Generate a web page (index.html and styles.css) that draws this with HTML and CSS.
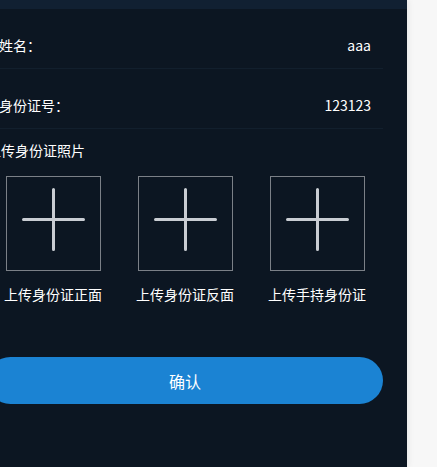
FILE: index.html
```html
<!DOCTYPE html>
<html lang="zh-CN">
<head>
<meta charset="utf-8">
<title>实名认证</title>
<link rel="stylesheet" href="styles.css">
</head>
<body>
<div class="page">
  <div class="panel">
    <div class="topbar"></div>
    <div class="content">
      <div class="row">
        <span class="label">姓名：</span>
        <span class="value">aaa</span>
      </div>
      <div class="row">
        <span class="label">身份证号：</span>
        <span class="value">123123</span>
      </div>
      <div class="section-title">上传身份证照片</div>
      <div class="uploads">
        <div class="upload">
          <div class="box">
            <svg class="plus" width="95" height="95" viewBox="0 0 95 95"><path d="M47.5 13.5V73.5M17.5 43.5H77.5" stroke="#c9cdd3" stroke-width="3" stroke-linecap="round" fill="none"/></svg>
          </div>
          <div class="upload-label">上传身份证正面</div>
        </div>
        <div class="upload">
          <div class="box">
            <svg class="plus" width="95" height="95" viewBox="0 0 95 95"><path d="M47.5 13.5V73.5M17.5 43.5H77.5" stroke="#c9cdd3" stroke-width="3" stroke-linecap="round" fill="none"/></svg>
          </div>
          <div class="upload-label">上传身份证反面</div>
        </div>
        <div class="upload">
          <div class="box">
            <svg class="plus" width="95" height="95" viewBox="0 0 95 95"><path d="M47.5 13.5V73.5M17.5 43.5H77.5" stroke="#c9cdd3" stroke-width="3" stroke-linecap="round" fill="none"/></svg>
          </div>
          <div class="upload-label">上传手持身份证</div>
        </div>
      </div>
      <button class="confirm" type="button">确认</button>
    </div>
  </div>
</div>
</body>
</html>
```

FILE: styles.css
```css
html, body {
  margin: 0;
  padding: 0;
  background: #f7f7f7;
  font-family: "Noto Sans CJK SC", "Liberation Sans", sans-serif;
  color: #ffffff;
}

.page {
  display: flex;
  height: 467px;
  overflow: hidden;
}

.panel {
  width: 407px;
  flex: none;
  height: 467px;
  background: #0c1622;
  box-shadow: 2px 0 6px rgba(0, 0, 0, 0.06);
  overflow: hidden;
}

.topbar {
  height: 9px;
  background: #112032;
}

.content {
  margin-left: -13px;
  width: 396px;
}

.row {
  display: flex;
  justify-content: space-between;
  align-items: center;
  height: 59px;
  padding: 0 12px;
  border-bottom: 1px solid #121f2d;
  box-sizing: content-box;
}

.row .label,
.row .value {
  font-size: 14px;
  line-height: 20px;
  padding-top: 12px;
}

.section-title {
  font-size: 14px;
  line-height: 20px;
  margin-top: 11px;
}

.uploads {
  display: grid;
  grid-template-columns: repeat(3, 1fr);
  margin-top: 16px;
}

.upload {
  display: flex;
  flex-direction: column;
  align-items: center;
}

.box {
  width: 93px;
  height: 93px;
  border: 1px solid #7b8087;
  display: flex;
}

.plus {
  display: block;
  margin: -1px;
}

.upload-label {
  font-size: 14px;
  line-height: 20px;
  margin-top: 13px;
  white-space: nowrap;
}

.confirm {
  display: block;
  width: 396px;
  height: 47px;
  margin-top: 53px;
  border: none;
  border-radius: 24px;
  background: #1b83d3;
  color: #ffffff;
  font-family: "Noto Sans CJK SC", "Liberation Sans", sans-serif;
  font-size: 16px;
  line-height: 20px;
  padding: 0;
}
```
